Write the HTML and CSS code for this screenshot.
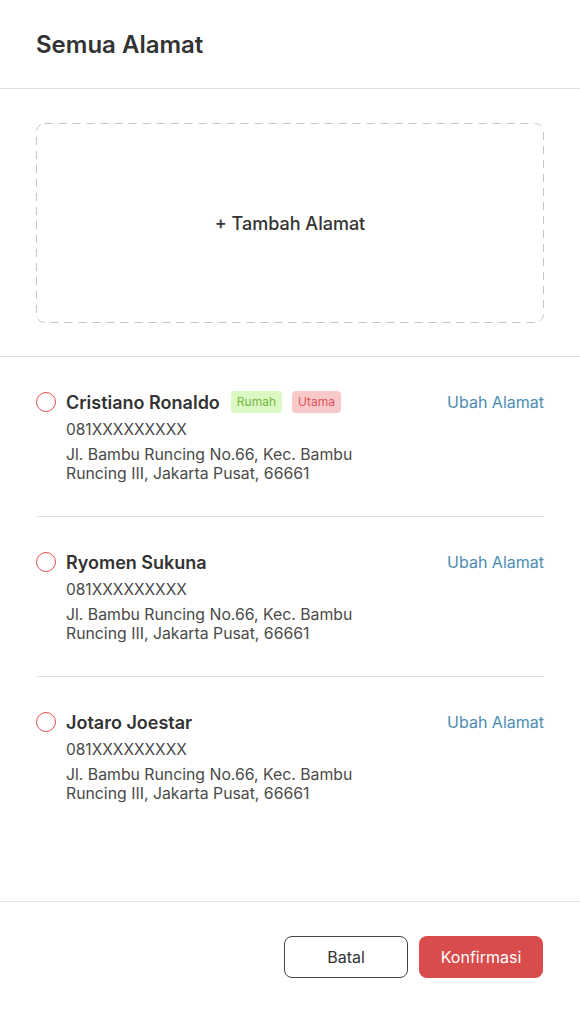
FILE: index.html
```html
<!DOCTYPE html>
<html lang="id">
<head>
<meta charset="utf-8">
<title>Semua Alamat</title>
<link rel="stylesheet" href="styles.css">
</head>
<body>
<div class="modal">
  <header class="header">
    <h1 class="title">Semua Alamat</h1>
  </header>
  <section class="add-section">
    <button class="add-box">+ Tambah Alamat</button>
  </section>
  <main class="list">
    <div class="item">
      <span class="radio"></span>
      <div class="info">
        <div class="name-row">
          <span class="name">Cristiano Ronaldo</span>
          <span class="tag tag-green">Rumah</span>
          <span class="tag tag-red">Utama</span>
        </div>
        <div class="phone">081XXXXXXXXX</div>
        <div class="address">Jl. Bambu Runcing No.66, Kec. Bambu<br>Runcing III, Jakarta Pusat, 66661</div>
      </div>
      <a class="edit">Ubah Alamat</a>
    </div>
    <div class="item">
      <span class="radio"></span>
      <div class="info">
        <div class="name-row">
          <span class="name">Ryomen Sukuna</span>
        </div>
        <div class="phone">081XXXXXXXXX</div>
        <div class="address">Jl. Bambu Runcing No.66, Kec. Bambu<br>Runcing III, Jakarta Pusat, 66661</div>
      </div>
      <a class="edit">Ubah Alamat</a>
    </div>
    <div class="item last">
      <span class="radio"></span>
      <div class="info">
        <div class="name-row">
          <span class="name">Jotaro Joestar</span>
        </div>
        <div class="phone">081XXXXXXXXX</div>
        <div class="address">Jl. Bambu Runcing No.66, Kec. Bambu<br>Runcing III, Jakarta Pusat, 66661</div>
      </div>
      <a class="edit">Ubah Alamat</a>
    </div>
  </main>
  <footer class="footer">
    <button class="btn btn-outline">Batal</button>
    <button class="btn btn-primary">Konfirmasi</button>
  </footer>
</div>
</body>
</html>
```
FILE: styles.css
```css
* { box-sizing: border-box; }
html, body { margin: 0; padding: 0; background: #fff; }
body {
  font-family: Inter, "Noto Sans", "Liberation Sans", sans-serif;
  color: #333;
}
.modal {
  width: 580px;
  height: 1013px;
  display: flex;
  flex-direction: column;
}
.header {
  height: 89px;
  padding: 0 36px;
  display: flex;
  align-items: center;
  border-bottom: 1px solid #e0e0e0;
}
.title {
  margin: 0;
  font-size: 24px;
  font-weight: 600;
  color: #333;
}
.add-section {
  padding: 34px 36px 33px;
  border-bottom: 1px solid #e0e0e0;
}
.add-box {
  width: 100%;
  height: 200px;
  border: none;
  border-radius: 8px;
  background-color: #fff;
  background-image: url("data:image/svg+xml,%3Csvg xmlns='http://www.w3.org/2000/svg' width='100%25' height='100%25'%3E%3Crect x='0.5' y='0.5' width='calc(100%25 - 1px)' height='calc(100%25 - 1px)' rx='8' ry='8' fill='none' stroke='%23c4c4c4' stroke-width='1' stroke-dasharray='8 6'/%3E%3C/svg%3E");
  font-family: inherit;
  font-size: 18px;
  font-weight: 500;
  color: #333;
  display: flex;
  align-items: center;
  justify-content: center;
}
.list {
  flex: 1;
  padding: 0 36px;
}
.item {
  display: flex;
  align-items: flex-start;
  padding: 34px 0 33px;
  border-bottom: 1px solid #e0e0e0;
}
.item.last { border-bottom: none; }
.radio {
  width: 20px;
  height: 20px;
  border: 1.5px solid #e05050;
  border-radius: 50%;
  margin-top: 1px;
  flex-shrink: 0;
}
.info {
  flex: 1;
  margin-left: 10px;
}
.name-row {
  display: flex;
  align-items: center;
  height: 24px;
  margin-top: -1px;
}
.name {
  font-size: 18px;
  font-weight: 600;
  color: #333;
}
.tag {
  height: 22px;
  line-height: 22px;
  padding: 0 6px;
  border-radius: 4px;
  font-size: 12px;
  margin-left: 10px;
}
.tag-green { background: #dcf9c4; color: #72b83c; margin-left: 11px; }
.tag-red { background: #f9c9c9; color: #e0525a; }
.phone {
  margin-top: 5px;
  font-size: 15.5px;
  line-height: 22px;
  color: #4a4a4a;
}
.address {
  margin-top: 4px;
  font-size: 15.8px;
  line-height: 19px;
  color: #4a4a4a;
}
.edit {
  font-size: 16px;
  line-height: 22px;
  margin-top: 0;
  color: #4a8db0;
  cursor: pointer;
}
.footer {
  border-top: 1px solid #e0e0e0;
  padding: 34px 37px 35px;
  display: flex;
  justify-content: flex-end;
  gap: 11px;
}
.btn {
  height: 42px;
  width: 124px;
  border-radius: 8px;
  font-family: inherit;
  font-size: 16px;
}
.btn-outline {
  background: #fff;
  border: 1px solid #444;
  color: #333;
}
.btn-primary {
  background: #d94c4c;
  border: none;
  color: #fff;
}
```
